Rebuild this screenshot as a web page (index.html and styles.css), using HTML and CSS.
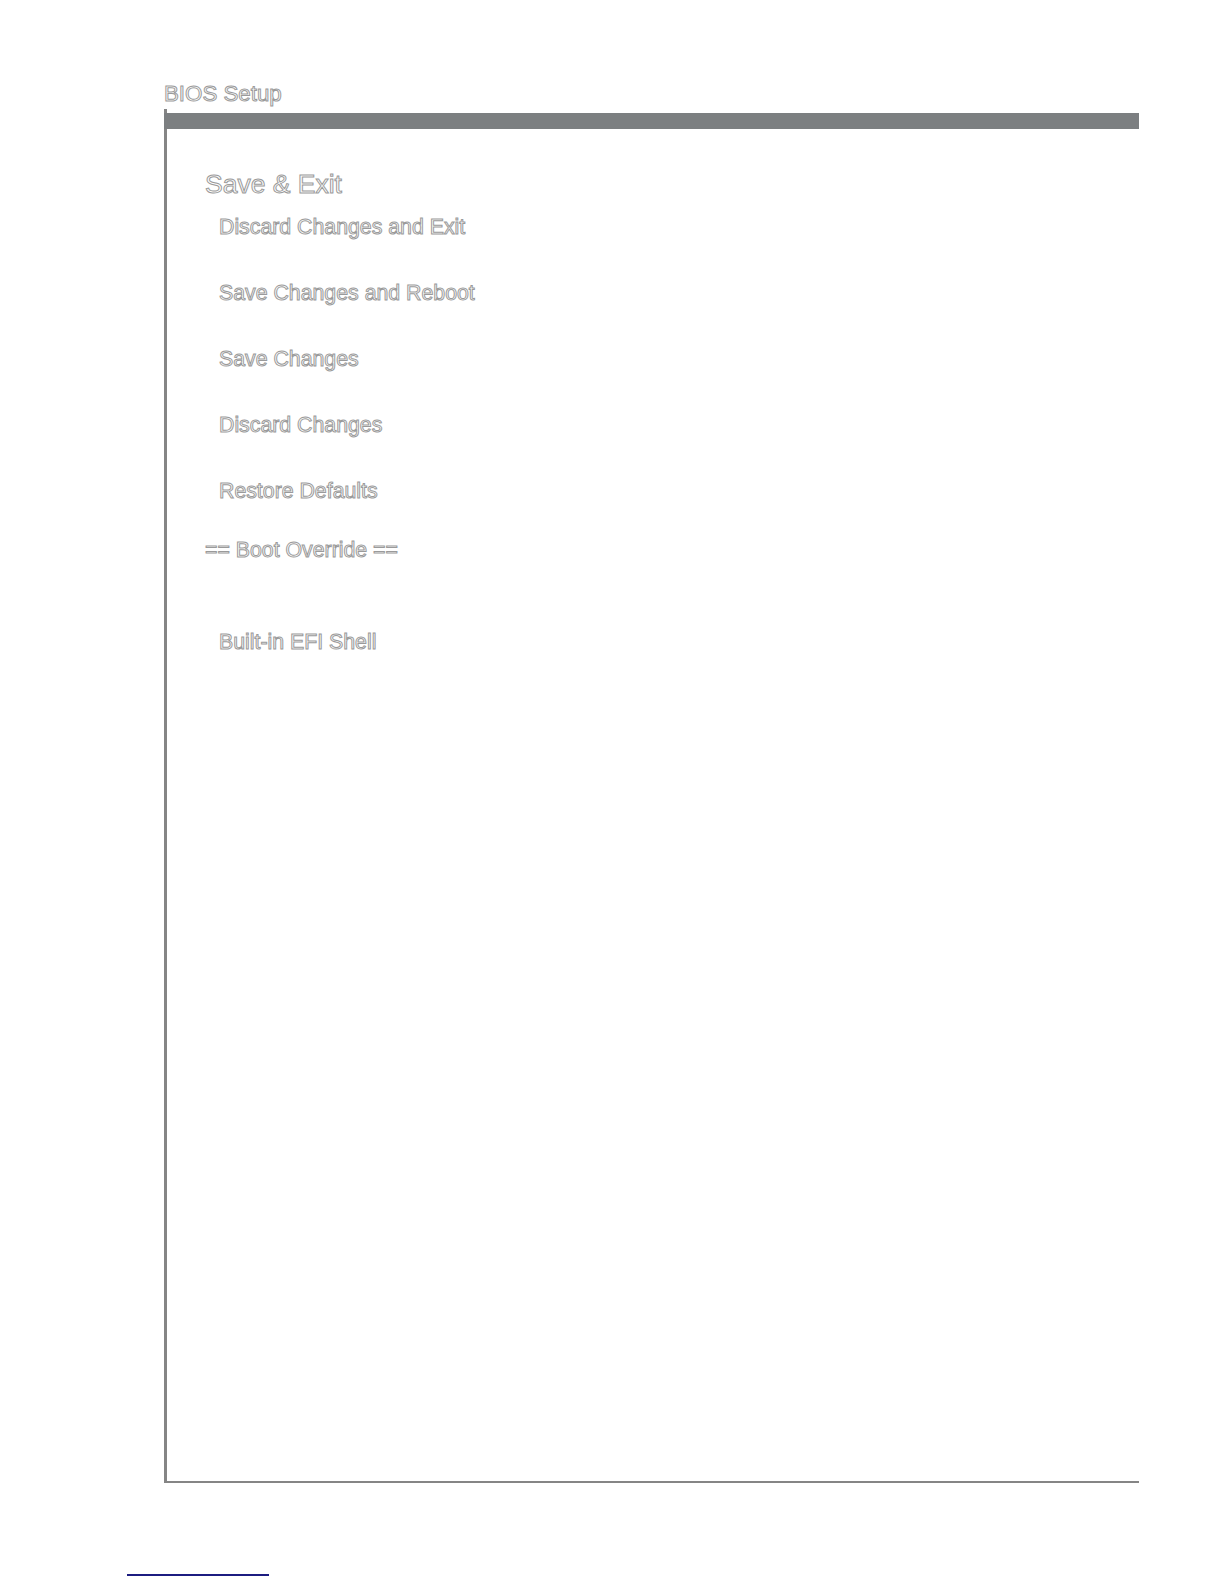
FILE: index.html
```
<!DOCTYPE html>
<html lang="en">
<head>
    <meta charset="UTF-8">
    <meta name="viewport" content="width=device-width, initial-scale=1.0">
    <title>BIOS Setup - Save &amp; Exit</title>

    <link rel="stylesheet" href="styles.css">

</head>
<body>

    <main>

        <header class="page-title outline">BIOS Setup</header>

        <section class="frame">
            <div class="frame-bar"></div>

            <div class="menu">
                <h1 class="menu-title outline">Save &amp; Exit</h1>

                <ul class="menu-items">
                    <li class="outline">Discard Changes and Exit</li>
                    <li class="outline">Save Changes and Reboot</li>
                    <li class="outline">Save Changes</li>
                    <li class="outline">Discard Changes</li>
                    <li class="outline">Restore Defaults</li>
                </ul>

                <div class="menu-group outline">== Boot Override ==</div>

                <ul class="menu-items menu-items-boot">
                    <li class="outline">Built-in EFI Shell</li>
                </ul>
            </div>
        </section>

        <footer class="page-footer">
            <span class="footer-line"></span>
        </footer>

    </main>

</body>
</html>
```

FILE: styles.css
```
body {
    margin: 0;
    background-color: white;
    font-family: 'Liberation Sans', Arial, sans-serif;
}

main {
    display: flex;
    flex-direction: column;
    padding-top: 82px;
}

.outline {
    color: white;
    -webkit-text-stroke: 1px #9a9a9a;
}

.page-title {
    margin-left: 164px;
    font-size: 22.3px;
    line-height: 24px;
}

.frame {
    margin-top: 3px;
    margin-left: 164px;
    width: 972px;
    height: 1372px;
    border-left: 3px solid #858585;
    border-bottom: 2px solid #858585;
}

.frame-bar {
    margin-top: 4px;
    margin-left: -3px;
    height: 16px;
    background-color: #7c7f81;
}

.menu {
    display: flex;
    flex-direction: column;
    padding-top: 40px;
    padding-left: 38px;
}

.menu-title {
    margin: 0;
    font-size: 26.5px;
    font-weight: normal;
    line-height: 30px;
}

.menu-items {
    display: flex;
    flex-direction: column;
    gap: 42px;
    margin: 16px 0 0 0;
    padding: 0 0 0 14px;
    list-style: none;
    font-size: 21.3px;
    line-height: 24px;
}

.menu-group {
    margin-top: 35px;
    font-size: 21.3px;
    line-height: 24px;
}

.menu-items-boot {
    margin-top: 68px;
}

.page-footer {
    margin-top: 91px;
    margin-left: 127px;
}

.footer-line {
    display: block;
    width: 142px;
    border-top: 2px solid #1c1c80;
}
```
